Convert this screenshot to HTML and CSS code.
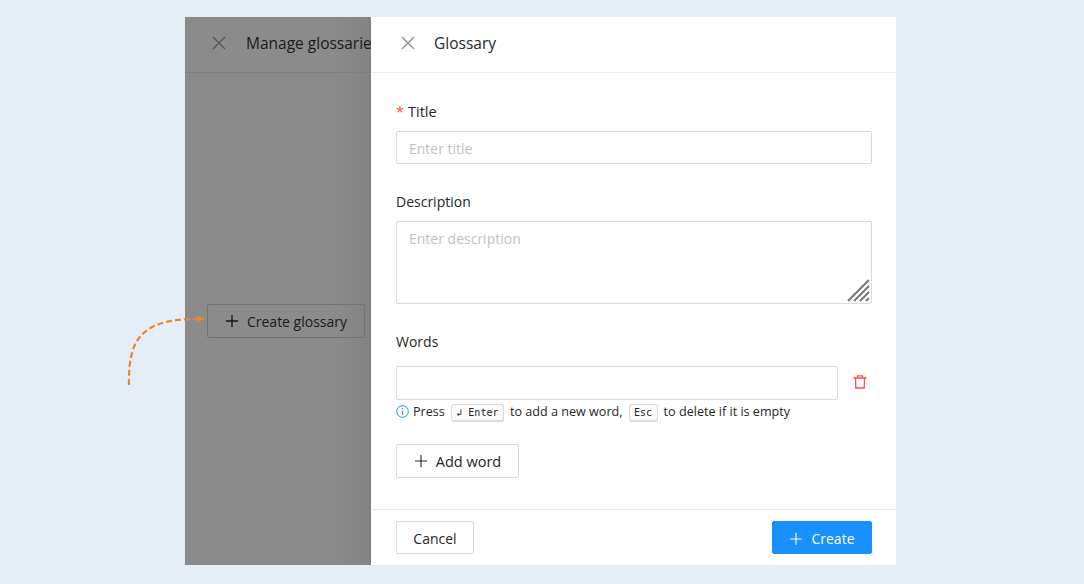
FILE: index.html
```html
<!DOCTYPE html>
<html lang="en">
<head>
    <meta charset="UTF-8">
    <title>Glossary</title>
    <link rel="stylesheet" href="styles.css">
</head>
<body>
    <div class="stage">
        <svg class="arrow" width="90" height="80" viewBox="0 0 90 80">
            <path d="M9 75 C8 28 22 9 78 9" fill="none" stroke="#e8872f" stroke-width="2.200" stroke-dasharray="6 3"/>
            <path d="M77 5.500 L85 9 L77 12.500 Z" fill="#e8872f"/>
        </svg>
        <div class="window">
            <div class="behind">
                <div class="behind-head">
                    <svg class="close" width="14" height="14" viewBox="0 0 14 14"><path d="M1 1 L13 13 M13 1 L1 13" stroke="#555" stroke-width="1.400" fill="none"/></svg>
                    <span class="behind-title">Manage glossaries</span>
                </div>
                <div class="behind-body">
                    <button class="btn btn-dim">
                        <svg width="14" height="14" viewBox="0 0 14 14"><path d="M7 1 V13 M1 7 H13" stroke="#1a1a1a" stroke-width="1.400" fill="none"/></svg>
                        Create glossary
                    </button>
                </div>
            </div>
            <div class="drawer">
                <div class="drawer-head">
                    <svg class="close" width="14" height="14" viewBox="0 0 14 14"><path d="M1 1 L13 13 M13 1 L1 13" stroke="#8c8c8c" stroke-width="1.400" fill="none"/></svg>
                    <span class="drawer-title">Glossary</span>
                </div>
                <div class="drawer-body">
                    <label class="label label-title"><span class="req">*</span>Title</label>
                    <input class="field" type="text" placeholder="Enter title">

                    <label class="label label-desc">Description</label>
                    <div class="area-wrap">
                        <textarea class="field area" placeholder="Enter description"></textarea>
                        <svg class="grip" width="24" height="24" viewBox="0 0 24 24"><path d="M1 22 L22 1 M7 22 L22 7 M13 22 L22 13 M19 22 L22 19" stroke="#777" stroke-width="2" fill="none"/></svg>
                    </div>

                    <label class="label label-words">Words</label>
                    <div class="word-row">
                        <input class="field word" type="text">
                        <svg class="trash" width="14" height="14" viewBox="0 0 14 14"><path d="M0.500 3 H13.500 M4.500 3 V0.800 H9.500 V3 M2.500 3 L2.800 13 H11.200 L11.500 3" stroke="#ff4d4f" stroke-width="1.300" fill="none"/></svg>
                    </div>
                    <div class="hint">
                        <svg class="hint-icon" width="13" height="13" viewBox="0 0 13 13"><circle cx="6.500" cy="6.500" r="5.800" stroke="#1890ff" fill="none"/><path d="M6.500 5.500 V10 M6.500 3 V4.300" stroke="#1890ff" fill="none"/></svg>
                        <span>Press</span>
                        <kbd class="key">↲ Enter</kbd>
                        <span>to add a new word,</span>
                        <kbd class="key">Esc</kbd>
                        <span>to delete if it is empty</span>
                    </div>
                    <button class="btn btn-add">
                        <svg width="14" height="14" viewBox="0 0 14 14"><path d="M7 1 V13 M1 7 H13" stroke="#262626" stroke-width="1.100" fill="none"/></svg>
                        Add word
                    </button>
                </div>
                <div class="drawer-foot">
                    <button class="btn btn-cancel">Cancel</button>
                    <button class="btn btn-create">
                        <svg width="14" height="14" viewBox="0 0 14 14"><path d="M7 1 V13 M1 7 H13" stroke="#fff" stroke-width="1.100" fill="none"/></svg>
                        Create
                    </button>
                </div>
            </div>
        </div>
    </div>
</body>
</html>
```

FILE: styles.css
```css
* {
    box-sizing: border-box;
}
html, body {
    margin: 0;
    height: 100%;
}
body {
    background-color: #e5edf7;
    color: #262626;
    font-family: 'Open Sans', 'Noto Sans', sans-serif;
    font-size: 14px;
    overflow: hidden;
}
.stage {
    position: relative;
    padding: 17px 0 0 185px;
}
.arrow {
    position: absolute;
    left: 120px;
    top: 310px;
    z-index: 2;
}
.window {
    display: flex;
    width: 711px;
    height: 548px;
}
.behind {
    width: 186px;
    flex-shrink: 0;
    overflow: hidden;
    display: flex;
    flex-direction: column;
    background: linear-gradient(to right, #8b8b8b 80%, #828282);
}
.behind-head {
    height: 56px;
    flex-shrink: 0;
    display: flex;
    align-items: center;
    gap: 20px;
    padding: 0 0 3px 27px;
    border-bottom: 1px solid #7e7e7e;
    white-space: nowrap;
}
.close {
    flex-shrink: 0;
}
.behind-title {
    flex-shrink: 0;
    font-size: 15.500px;
    color: #1a1a1a;
}
.behind-body {
    padding: 231px 0 0 22px;
}
.drawer {
    flex: 1;
    min-width: 0;
    display: flex;
    flex-direction: column;
    background-color: #fff;
}
.drawer-head {
    height: 56px;
    flex-shrink: 0;
    display: flex;
    align-items: center;
    gap: 19px;
    padding: 0 0 3px 30px;
    border-bottom: 1px solid #ececec;
}
.drawer-title {
    font-size: 15.500px;
}
.drawer-body {
    flex: 1;
    padding: 0 24px 0 25px;
}
.label {
    display: block;
    font-size: 14px;
    line-height: 20px;
}
.label-title {
    margin-top: 29px;
    margin-bottom: 9px;
    font-size: 14.500px;
}
.label-desc {
    margin-top: 28px;
    margin-bottom: 9px;
}
.label-words {
    margin-top: 28px;
    margin-bottom: 14px;
}
.req {
    color: #ff4d4f;
    margin-right: 4px;
}
.field {
    display: block;
    width: 100%;
    height: 33px;
    padding: 2px 12px 0;
    border: 1px solid #d9d9d9;
    border-radius: 2px;
    background-color: #fff;
    font-family: inherit;
    font-size: 14px;
    outline: none;
}
.field::placeholder {
    color: #bfbfbf;
}
.area-wrap {
    position: relative;
}
.area {
    height: 83px;
    padding-top: 7px;
    resize: none;
}
.grip {
    position: absolute;
    right: 1px;
    bottom: 1px;
}
.word-row {
    display: flex;
    align-items: center;
    gap: 15px;
}
.word {
    width: 442px;
    height: 34px;
}
.trash {
    margin-top: -2px;
}
.hint {
    display: flex;
    align-items: center;
    gap: 6px;
    height: 25px;
    margin-bottom: 1px;
    padding-bottom: 2px;
    font-size: 12.600px;
    color: #262626;
}
.hint-icon {
    margin-right: -2px;
}
.key {
    font-family: 'DejaVu Sans Mono', monospace;
    font-size: 10px;
    line-height: 15px;
    margin-top: 2px;
    padding: 0 4.500px;
    background-color: #fafafa;
    border: 1px solid #d9d9d9;
    border-bottom-width: 2px;
    border-radius: 3px;
}
.btn {
    display: inline-flex;
    align-items: center;
    justify-content: center;
    gap: 8px;
    height: 34px;
    border: 1px solid #d9d9d9;
    border-radius: 2px;
    background-color: #fff;
    color: #262626;
    font-family: inherit;
    font-size: 14px;
    padding: 0;
}
.btn-dim {
    width: 158px;
    background-color: transparent;
    border-color: #727272;
    color: #1a1a1a;
}
.btn-add {
    width: 123px;
    margin-top: 18px;
    font-size: 14.500px;
}
.drawer-foot {
    height: 56px;
    flex-shrink: 0;
    display: flex;
    justify-content: space-between;
    padding: 11px 24px 0 25px;
    border-top: 1px solid #e8e8e8;
}
.btn-cancel {
    width: 78px;
    height: 33px;
    padding-top: 2px;
}
.btn-create {
    width: 100px;
    height: 33px;
    padding-top: 2px;
    background-color: #1890ff;
    border-color: #1890ff;
    color: #fff;
}
```
